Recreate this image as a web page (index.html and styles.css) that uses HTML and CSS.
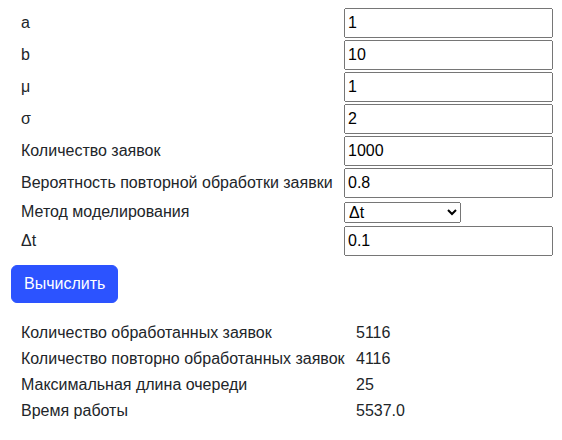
FILE: index.html
```html
<!DOCTYPE html>
<html lang="ru">
<head>
<meta charset="utf-8">
<title>Моделирование</title>
<link rel="stylesheet" href="styles.css">
</head>
<body>
<div class="page">
  <table class="params">
    <colgroup><col class="c-label"><col class="c-field"></colgroup>
    <tbody>
      <tr><td class="lbl">a</td><td><input class="field" type="text" value="1"></td></tr>
      <tr><td class="lbl">b</td><td><input class="field" type="text" value="10"></td></tr>
      <tr><td class="lbl">μ</td><td><input class="field" type="text" value="1"></td></tr>
      <tr><td class="lbl">σ</td><td><input class="field" type="text" value="2"></td></tr>
      <tr><td class="lbl">Количество заявок</td><td><input class="field" type="text" value="1000"></td></tr>
      <tr><td class="lbl">Вероятность повторной обработки заявки</td><td><input class="field" type="text" value="0.8"></td></tr>
      <tr><td class="lbl">Метод моделирования</td><td><select class="method"><option>Δt</option><option>Особых состояний</option></select></td></tr>
      <tr><td class="lbl">Δt</td><td><input class="field" type="text" value="0.1"></td></tr>
    </tbody>
  </table>
  <button class="btn" type="button">Вычислить</button>
  <table class="results">
    <colgroup><col class="r-label"><col class="r-value"></colgroup>
    <tbody>
      <tr><td class="lbl">Количество обработанных заявок</td><td>5116</td></tr>
      <tr><td class="lbl">Количество повторно обработанных заявок</td><td>4116</td></tr>
      <tr><td class="lbl">Максимальная длина очереди</td><td>25</td></tr>
      <tr><td class="lbl">Время работы</td><td>5537.0</td></tr>
    </tbody>
  </table>
</div>
</body>
</html>
```

FILE: styles.css
```css
html, body {
  margin: 0;
  padding: 0;
  background: #ffffff;
}
body {
  font-family: "Liberation Sans", Arial, sans-serif;
  font-size: 16px;
  line-height: 1.5;
  color: #212529;
}
.page {
  padding: 6px 11px 0 11px;
}
table {
  border-collapse: separate;
  border-spacing: 2px;
  table-layout: fixed;
}
td {
  padding: 0;
  vertical-align: middle;
}
.params {
  width: 544px;
}
.c-label { width: 329px; }
.c-field { width: 209px; }
.lbl {
  padding-left: 8px;
  white-space: nowrap;
}
.field {
  display: block;
  box-sizing: border-box;
  width: 209px;
  height: 30px;
  margin: 0;
  font-family: inherit;
  font-size: 16px;
  line-height: 24px;
  color: #000;
}
.method {
  display: block;
  box-sizing: border-box;
  width: 117px;
  height: 21px;
  margin: 0;
  font-family: inherit;
  font-size: 16px;
  color: #000;
}
.btn {
  display: block;
  margin: 7px 0 0 0;
  padding: 6px 12px;
  font-family: inherit;
  font-size: 16px;
  line-height: 24px;
  color: #ffffff;
  background: #2c53ff;
  border: 1px solid #2c53ff;
  border-radius: 6px;
  cursor: pointer;
}
.results {
  margin-top: 16px;
  width: 440px;
}
.r-label { width: 341px; }
.r-value { width: 93px; }
```
